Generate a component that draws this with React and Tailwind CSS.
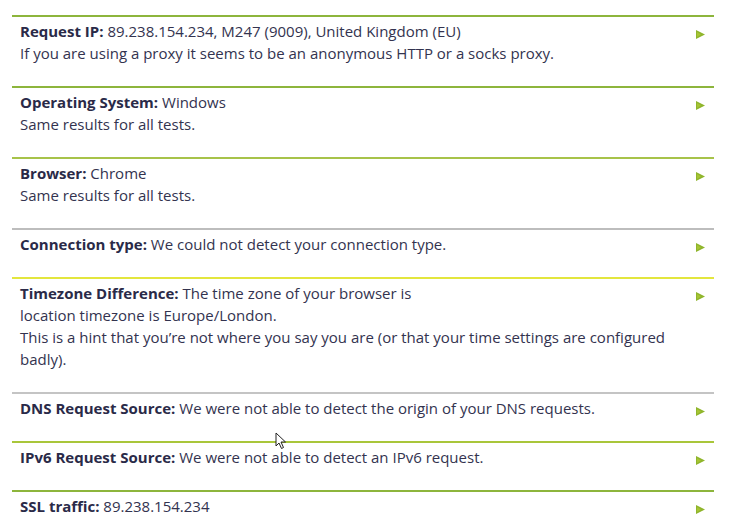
const rows = [
  {
    label: "Request IP:",
    value: "89.238.154.234, M247 (9009), United Kingdom (EU)",
    extra: ["If you are using a proxy it seems to be an anonymous HTTP or a socks proxy."],
    line: "border-[#8db53c]",
  },
  {
    label: "Operating System:",
    value: "Windows",
    extra: ["Same results for all tests."],
    line: "border-[#8db53c]",
  },
  {
    label: "Browser:",
    value: "Chrome",
    extra: ["Same results for all tests."],
    line: "border-[#a7c34a]",
  },
  {
    label: "Connection type:",
    value: "We could not detect your connection type.",
    extra: [],
    line: "border-[#bdbdbd]",
  },
  {
    label: "Timezone Difference:",
    value: "The time zone of your browser is",
    extra: [
      "location timezone is Europe/London.",
      "This is a hint that you\u2019re not where you say you are (or that your time settings are configured badly).",
    ],
    line: "border-[#e3e63e]",
  },
  {
    label: "DNS Request Source:",
    value: "We were not able to detect the origin of your DNS requests.",
    extra: [],
    line: "border-[#c4c4c4]",
  },
  {
    label: "IPv6 Request Source:",
    value: "We were not able to detect an IPv6 request.",
    extra: [],
    line: "border-[#a9c63a]",
  },
  {
    label: "SSL traffic:",
    value: "89.238.154.234",
    extra: [],
    line: "border-[#8db53c]",
  },
];

function Arrow() {
  return (
    <svg width="9" height="9" viewBox="0 0 9 9" className="shrink-0 mt-[10px]">
      <polygon points="0,0 9,4.5 0,9" fill="#8fb52c" />
      <polygon points="1,2 5,4.5 1,7" fill="#b7cf3a" opacity="0.6" />
    </svg>
  );
}

export default function App() {
  return (
    <div
      className="relative bg-white w-[729px] h-[532px] overflow-hidden pt-[15px] text-[#33334f]"
      style={{ fontFamily: "'Open Sans', sans-serif" }}
    >
      <div className="ml-[12px] w-[702px]">
        {rows.map((r) => (
          <div key={r.label} className={`border-t-2 ${r.line} flex justify-between gap-[20px] pl-[8px] pr-[9px] pt-[3px] pb-[22px]`}>
            <div className="text-[15px] leading-[22px]">
              <div>
                <span className="font-bold text-[#2a2a48]">{r.label}</span> {r.value}
              </div>
              {r.extra.map((e) => (
                <div key={e}>{e}</div>
              ))}
            </div>
            <Arrow />
          </div>
        ))}
      </div>
      <svg className="absolute left-[275px] top-[432px]" width="12" height="18" viewBox="0 0 12 18">
        <path d="M1 1 L1 14 L4 11 L6.5 16.5 L8.5 15.5 L6 10 L10.5 10 Z" fill="#fff" stroke="#222" strokeWidth="1" />
      </svg>
    </div>
  );
}
